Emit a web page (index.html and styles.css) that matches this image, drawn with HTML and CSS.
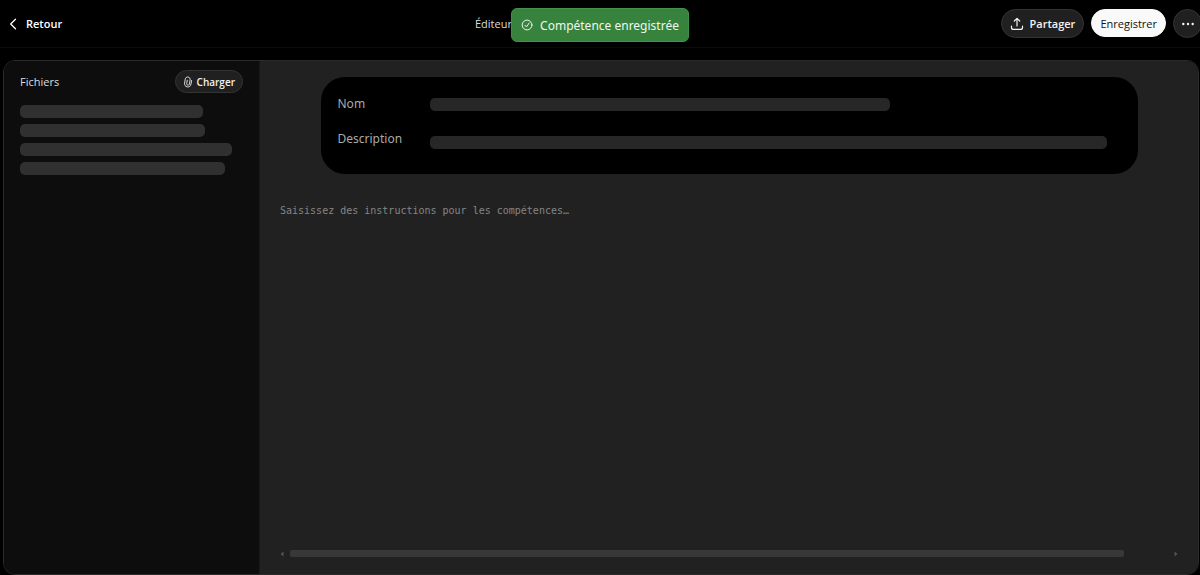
FILE: index.html
```html
<!DOCTYPE html>
<html lang="fr">
<head>
<meta charset="utf-8">
<meta name="viewport" content="width=device-width, initial-scale=1">
<title>Éditeur</title>
<link rel="stylesheet" href="styles.css">
</head>
<body>
<header class="topbar">
  <a class="back" href="#">
    <svg class="back-icon" viewBox="0 0 8 12" aria-hidden="true"><path d="M6.500 1.200 1.700 6l4.800 4.800"/></svg>
    <span>Retour</span>
  </a>
  <h1 class="title">Éditeur</h1>
  <div class="actions">
    <button class="btn" type="button">
      <svg class="share-icon" viewBox="0 0 14 14" aria-hidden="true"><path d="M7 9V1.500M4.300 4 7 1.300 9.700 4M1.500 9v1.400c0 1.300.7 2 2 2h7c1.300 0 2-.7 2-2V9"/></svg>
      Partager
    </button>
    <button class="btn btn-primary" type="button">Enregistrer</button>
    <button class="btn btn-more" type="button" aria-label="Plus">
      <svg class="more-icon" viewBox="0 0 12 4" aria-hidden="true"><circle cx="1.300" cy="2" r="1.200"/><circle cx="6" cy="2" r="1.200"/><circle cx="10.700" cy="2" r="1.200"/></svg>
    </button>
  </div>
</header>
<div class="toast" role="status">
  <svg class="check-icon" viewBox="0 0 12 12" aria-hidden="true"><circle cx="6" cy="6" r="4.900"/><path d="m3.900 6.300 1.500 1.600 2.700-3.800"/></svg>
  <span>Compétence enregistrée</span>
</div>
<main class="workspace">
  <aside class="files">
    <div class="files-head">
      <h2 class="files-title">Fichiers</h2>
      <button class="btn btn-small" type="button">
        <svg class="clip-icon" viewBox="0 0 10 12" aria-hidden="true"><path d="M8.600 4.500 8 8c-.3 2-1.700 3.200-3.700 2.900C2.300 10.600 1.300 9 1.600 7.100l.6-3.800C2.500 1.600 3.700.8 5.200 1c1.400.3 2.100 1.400 1.900 2.800L6.400 8c-.2.9-.8 1.300-1.600 1.200-.8-.1-1.200-.8-1.100-1.600l.6-3.400"/></svg>
        Charger
      </button>
    </div>
    <div class="file-list">
      <div class="skeleton file-a"></div>
      <div class="skeleton file-b"></div>
      <div class="skeleton file-c"></div>
      <div class="skeleton file-d"></div>
    </div>
  </aside>
  <section class="editor">
    <div class="meta">
      <div class="meta-row">
        <span class="meta-label">Nom</span>
        <div class="meta-value"><div class="skeleton skeleton-dark name-bar"></div></div>
      </div>
      <div class="meta-row">
        <span class="meta-label">Description</span>
        <div class="meta-value meta-value-low"><div class="skeleton skeleton-dark"></div></div>
      </div>
    </div>
    <textarea class="instructions" aria-label="Instructions" placeholder="Saisissez des instructions pour les compétences…"></textarea>
    <div class="scrollbar" aria-hidden="true">
      <svg class="arrow" viewBox="0 0 4 6"><path d="M3.500.5v5L.5 3z"/></svg>
      <div class="track"><div class="thumb"></div></div>
      <svg class="arrow" viewBox="0 0 4 6"><path d="M.5.5v5l3-2.500z"/></svg>
    </div>
  </section>
</main>
</body>
</html>
```
FILE: styles.css
```css
* {
  box-sizing: border-box;
}

body {
  margin: 0;
  height: 100vh;
  display: flex;
  flex-direction: column;
  overflow: hidden;
  background: #000;
  color: #f3f3f3;
  font-family: "Open Sans", "Noto Sans", sans-serif;
  font-size: 11px;
}

svg {
  flex: none;
  fill: none;
  stroke: currentColor;
  stroke-linecap: round;
  stroke-linejoin: round;
}

.topbar {
  flex: none;
  display: grid;
  grid-template-columns: 1fr 250px 1fr;
  align-items: center;
  height: 48px;
  border-bottom: 1px solid #0b0b0b;
}

.back {
  display: flex;
  align-items: center;
  gap: 9px;
  justify-self: start;
  padding-left: 9px;
  color: #fff;
  font-weight: 600;
  text-decoration: none;
}

.back-icon {
  width: 8px;
  height: 12px;
  stroke-width: 1.3;
}

.title {
  margin: 0;
  color: #ddd;
  font-size: 11px;
  font-weight: 500;
}

.actions {
  display: flex;
  justify-content: flex-end;
  gap: 7px;
  margin-right: -2px;
}

.btn {
  display: flex;
  align-items: center;
  justify-content: center;
  gap: 6px;
  height: 29px;
  padding: 0 8px;
  border: 1px solid #343434;
  border-radius: 15px;
  background: #202020;
  color: #f3f3f3;
  font: inherit;
  font-weight: 600;
  white-space: nowrap;
}

.btn-primary {
  height: 28px;
  border-color: #f9f9f9;
  background: #f9f9f9;
  color: #111;
  font-weight: 500;
}

.btn-more {
  width: 29px;
  padding: 0;
}

.share-icon {
  width: 14px;
  height: 14px;
  stroke-width: 1.2;
}

.more-icon {
  width: 12px;
  height: 4px;
  fill: currentColor;
  stroke: none;
}

.toast {
  position: absolute;
  top: 8px;
  left: 50%;
  transform: translateX(-50%);
  display: flex;
  align-items: center;
  gap: 7px;
  height: 34px;
  padding: 0 9px;
  border: 1px solid #43944a;
  border-radius: 6px;
  background: #37833e;
  color: #eef8ee;
  font-family: "Noto Sans", sans-serif;
  font-size: 12px;
  white-space: nowrap;
}

.check-icon {
  width: 12px;
  height: 12px;
}

.workspace {
  flex: 1;
  display: grid;
  grid-template-columns: 256px 1fr;
  margin: 12px 1px 0 3px;
  border: 1px solid #2a2a2a;
  border-radius: 12px;
  overflow: hidden;
}

.files {
  padding: 9px 16px;
  border-right: 1px solid #181818;
  background: #0d0d0d;
}

.files-head {
  display: flex;
  align-items: center;
  justify-content: space-between;
}

.files-title {
  margin: 0;
  color: #ddd;
  font-size: 11px;
  font-weight: 500;
}

.btn-small {
  height: 23px;
  padding: 0 7px;
  gap: 4px;
  font-size: 10px;
}

.clip-icon {
  width: 10px;
  height: 12px;
  stroke-width: 0.9;
}

.file-list {
  display: grid;
  gap: 6px;
  margin-top: 12px;
}

.skeleton {
  height: 13px;
  border-radius: 5px;
  background: #303030;
}

.skeleton-dark {
  background: #272727;
}

.file-a { width: 82%; }
.file-b { width: 83%; }
.file-c { width: 95%; }
.file-d { width: 92%; }

.editor {
  display: flex;
  flex-direction: column;
  min-width: 0;
  padding: 16px 20px;
  background: #212121;
}

.meta {
  display: grid;
  gap: 17px;
  width: 100%;
  max-width: 817px;
  min-height: 97px;
  align-content: start;
  align-self: center;
  padding: 18px 31px 0 17px;
  border-radius: 24px;
  background: #000;
}

.meta-row {
  display: grid;
  grid-template-columns: 92px 1fr;
}

.meta-label {
  color: #aaa;
  font-family: "Noto Sans", sans-serif;
  font-size: 12px;
  line-height: 18px;
}

.meta-value {
  padding-top: 3px;
}

.meta-value-low {
  padding-top: 6px;
}

.name-bar {
  width: 68%;
}

.instructions {
  flex: 1;
  margin: 30px 0 0;
  padding: 0;
  border: 0;
  outline: 0;
  resize: none;
  background: transparent;
  color: #ddd;
  font: 10px/14px "DejaVu Sans Mono", monospace;
}

.instructions::placeholder {
  color: #858585;
  opacity: 1;
}

.scrollbar {
  display: flex;
  align-items: center;
  gap: 6px;
  height: 9px;
}

.track {
  flex: 1;
}

.thumb {
  width: 95%;
  height: 7px;
  border-radius: 2px;
  background: #383838;
}

.arrow {
  width: 4px;
  height: 6px;
  fill: #555;
  stroke: none;
}
```
